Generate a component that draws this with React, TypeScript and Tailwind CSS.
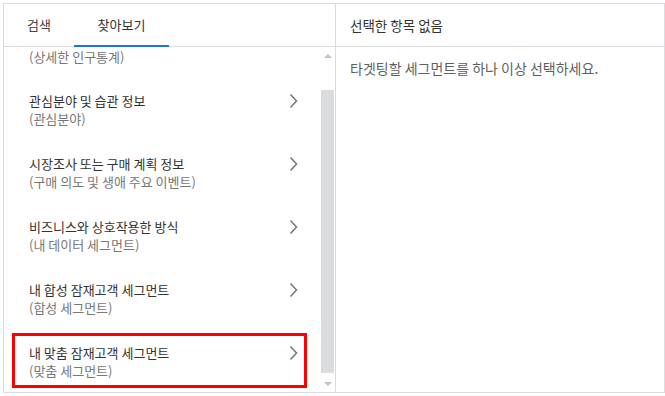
const FONT = "font-['Malgun_Gothic','Noto_Sans_CJK_KR',sans-serif]";

const items = [
  { title: "관심분야 및 습관 정보", sub: "(관심분야)" },
  { title: "시장조사 또는 구매 계획 정보", sub: "(구매 의도 및 생애 주요 이벤트)" },
  { title: "비즈니스와 상호작용한 방식", sub: "(내 데이터 세그먼트)" },
  { title: "내 합성 잠재고객 세그먼트", sub: "(합성 세그먼트)" },
  { title: "내 맞춤 잠재고객 세그먼트", sub: "(맞춤 세그먼트)" },
];

function Chevron() {
  return (
    <svg width="9" height="16" viewBox="0 0 9 16" fill="none" className="shrink-0">
      <path d="M1.5 1.5 L7.5 8 L1.5 14.5" stroke="#757575" strokeWidth="1.5" />
    </svg>
  );
}

function Item({ title, sub }: { title: string; sub: string }) {
  return (
    <div className="flex h-[63px] items-start justify-between pl-[25px] pr-[22px] pt-[11px]">
      <div className="flex flex-col">
        <span className="text-[13px] leading-[18px] text-[#333]">{title}</span>
        <span className="text-[13px] leading-[18px] text-[#777]">{sub}</span>
      </div>
      <div className="flex h-[18px] items-center">
        <Chevron />
      </div>
    </div>
  );
}

function Scrollbar() {
  return (
    <div className="flex w-[15px] shrink-0 flex-col items-center">
      <div className="flex h-[17px] w-full items-center justify-center">
        <div className="h-0 w-0 border-x-[4px] border-b-[4px] border-x-transparent border-b-[#c4c4c4]" />
      </div>
      <div className="mt-[26px] h-[283px] w-[13px] bg-[#dadce0]" />
      <div className="flex-1" />
      <div className="flex h-[17px] w-full items-center justify-center">
        <div className="h-0 w-0 border-x-[4px] border-t-[4px] border-x-transparent border-t-[#c4c4c4]" />
      </div>
    </div>
  );
}

export default function App() {
  return (
    <div className={`h-[396px] w-[665px] bg-white p-[3px] ${FONT}`}>
      <div className="relative flex h-[390px] w-[662px] border border-[#dadce0]">
        {/* Left: browse list */}
        <div className="flex w-[332px] shrink-0 flex-col border-r border-[#dadce0]">
          <div className="flex h-[43px] shrink-0 border-b border-[#dadce0]">
            <div className="flex w-[70px] items-center justify-center text-[13px] text-[#444]">검색</div>
            <div className="relative flex w-[95px] items-center justify-center text-[13px] text-[#333]">
              찾아보기
              <span className="absolute bottom-[-1px] left-0 h-[2px] w-full bg-[#1a73e8]" />
            </div>
          </div>
          <div className="flex min-h-0 flex-1">
            <div className="min-w-0 flex-1 overflow-hidden">
              {/* previous item, scrolled mostly out of view */}
              <div className="h-[34px] pl-[25px] pt-px text-[13px] leading-[18px] text-[#777]">
                (상세한 인구통계)
              </div>
              {items.map((it) => (
                <Item key={it.title} title={it.title} sub={it.sub} />
              ))}
            </div>
            <Scrollbar />
          </div>
        </div>

        {/* Right: selection */}
        <div className="flex flex-1 flex-col">
          <div className="flex h-[43px] shrink-0 items-center border-b border-[#dadce0] pl-[14px] text-[13.5px] text-[#333]">
            선택한 항목 없음
          </div>
          <div className="pl-[14px] pt-[12px] text-[14px] leading-[18px] text-[#5f5f5f]">
            타겟팅할 세그먼트를 하나 이상 선택하세요.
          </div>
        </div>

        {/* annotation */}
        <div className="pointer-events-none absolute left-[8px] top-[329px] h-[55px] w-[295px] border-[3px] border-[#ff0000]" />
      </div>
    </div>
  );
}
